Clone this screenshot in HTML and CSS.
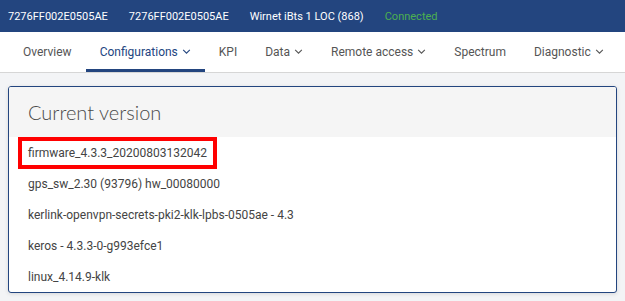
FILE: index.html
```html
<!DOCTYPE html>
<html lang="en">
<head>
    <meta charset="UTF-8">
    <title>Gateway - Configurations</title>
    <link rel="stylesheet" href="styles.css">
</head>
<body>

<div class="topbar">
    <span>7276FF002E0505AE</span>
    <span>7276FF002E0505AE</span>
    <span>Wirnet iBts 1 LOC (868)</span>
    <span class="status">Connected</span>
</div>

<div class="nav">
    <a href="#">Overview</a>
    <a href="#" class="active">Configurations <svg class="caret" viewBox="0 0 10 6"><path d="M1 1 L5 5 L9 1"/></svg></a>
    <a href="#">KPI</a>
    <a href="#">Data <svg class="caret" viewBox="0 0 10 6"><path d="M1 1 L5 5 L9 1"/></svg></a>
    <a href="#">Remote access <svg class="caret" viewBox="0 0 10 6"><path d="M1 1 L5 5 L9 1"/></svg></a>
    <a href="#">Spectrum</a>
    <a href="#">Diagnostic <svg class="caret" viewBox="0 0 10 6"><path d="M1 1 L5 5 L9 1"/></svg></a>
</div>

<div class="content">
    <div class="card">
        <div class="card-header">Current version</div>
        <ul class="versions">
            <li><span class="highlight">firmware_4.3.3_20200803132042</span></li>
            <li>gps_sw_2.30 (93796) hw_00080000</li>
            <li>kerlink-openvpn-secrets-pki2-klk-lpbs-0505ae - 4.3</li>
            <li>keros - 4.3.3-0-g993efce1</li>
            <li>linux_4.14.9-klk</li>
        </ul>
    </div>
</div>

</body>
</html>
```

FILE: styles.css
```css
body {
    font-family: Roboto, "Liberation Sans", sans-serif;
    background-color: #f3f4f6;
    margin: 0;
    padding: 0;
}
.topbar {
    background-color: #23457f;
    color: white;
    height: 32px;
    display: flex;
    align-items: center;
    gap: 21px;
    padding: 0 8px;
    font-size: 11px;
}
.topbar .status {
    color: #4caf50;
}
.nav {
    background-color: white;
    height: 40px;
    display: flex;
    padding-left: 9px;
    border-bottom: 1px solid #d6d6d6;
}
.nav a {
    display: flex;
    align-items: center;
    gap: 4px;
    padding: 2px 14px 0 14px;
    color: #555;
    text-decoration: none;
    font-size: 12px;
    white-space: nowrap;
    border-bottom: 3px solid transparent;
}
.nav a.active {
    color: #23457f;
    border-bottom-color: #23457f;
}
.caret {
    width: 9px;
    height: 5px;
    fill: none;
    stroke: currentColor;
    stroke-width: 1.3;
}
.content {
    padding: 13px 8px 8px 8px;
}
.card {
    background-color: white;
    border: 1px solid #23457f;
    border-radius: 3px;
    box-shadow: 0 1px 4px rgba(0, 0, 0, 0.12);
    overflow: hidden;
}
.card-header {
    background-color: #f5f5f5;
    height: 50px;
    display: flex;
    align-items: center;
    padding-left: 19px;
    font-family: Lato, "Open Sans", sans-serif;
    font-weight: 300;
    font-size: 20px;
    color: #4a4a4a;
}
.versions {
    list-style: none;
    margin: 0;
    padding: 0;
}
.versions li {
    height: 31px;
    display: flex;
    align-items: center;
    padding-left: 19px;
    font-size: 12px;
    color: #444;
}
.versions .highlight {
    height: 24px;
    display: flex;
    align-items: center;
    margin-left: -10px;
    padding: 0 6px 0 6px;
    border: 4px solid #ff0000;
}
```
